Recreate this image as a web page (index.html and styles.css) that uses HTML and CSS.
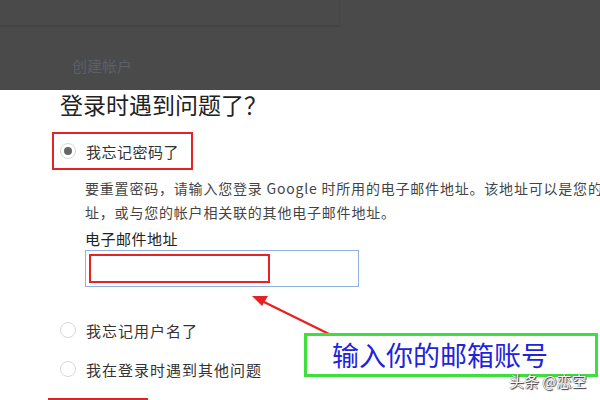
FILE: index.html
```html
<!DOCTYPE html>
<html lang="zh-CN">
<head>
  <meta charset="UTF-8">
  <title>登录时遇到问题了？</title>
  <link rel="stylesheet" href="styles.css">
</head>
<body>
  <div class="topBar">
    <div class="toolStrip"></div>
    <a class="createLink">创建帐户</a>
  </div>

  <div class="main">
    <h1>登录时遇到问题了？</h1>

    <label class="option marked">
      <span class="radio checked"></span>
      <span>我忘记密码了</span>
    </label>

    <div class="details">
      <p class="hint">
        <span class="line">要重置密码，请输入您登录 Google 时所用的电子邮件地址。该地址可以是您的</span>
        <span class="line">址，或与您的帐户相关联的其他电子邮件地址。</span>
      </p>
      <div class="fieldLabel">电子邮件地址</div>
      <div class="emailBox">
        <div class="emailMark"></div>
      </div>
    </div>

    <label class="option second">
      <span class="radio"></span>
      <span>我忘记用户名了</span>
    </label>
    <label class="option">
      <span class="radio"></span>
      <span>我在登录时遇到其他问题</span>
    </label>

    <div class="nextMark"></div>
  </div>

  <svg class="arrow" width="600" height="400" viewBox="0 0 600 400">
    <line x1="331" y1="335" x2="262" y2="301" stroke="#e42424" stroke-width="2.5"/>
    <polygon points="252,296 268,296 262,306" fill="#e42424"/>
  </svg>

  <div class="note">输入你的邮箱账号</div>
  <div class="watermark">头条 @恋空</div>
</body>
</html>
```

FILE: styles.css
```css
body { margin:0; width:600px; height:400px; overflow:hidden; background:#fff; position:relative; font-family:"Noto Sans CJK SC", "Noto Sans", sans-serif; color:#333; }

.topBar { height:90px; background:#4a4a4a; }
.toolStrip { width:339px; height:25px; border-bottom:2px solid #444; border-right:1px solid #464646; }
.createLink { display:block; margin-top:29px; padding-left:72px; font-size:15px; line-height:20px; color:#5b5f68; }

.main { padding-left:60px; }
h1 { margin:0; font-size:23px; line-height:28px; font-weight:normal; color:#222; }

.option { display:flex; align-items:center; gap:10px; height:24px; font-size:15px; letter-spacing:1px; color:#333; }
.option.marked { margin:14px 0 0 -8px; width:141px; height:38px; box-sizing:border-box; padding-left:6px; border:2px solid #e42424; letter-spacing:0.5px; }
.option.second { margin-top:31px; }
.option.second + .option { margin-top:15px; }
.radio { width:16px; height:16px; box-sizing:border-box; border:1px solid #d8d8d8; border-radius:50%; background:#fff; display:flex; align-items:center; justify-content:center; }
.radio.checked::after { content:""; width:8px; height:8px; border-radius:50%; background:#666; }

.details { padding-left:25px; }
.hint { margin:6px 0 0; font-size:14px; line-height:24px; letter-spacing:0.8px; color:#444; }
.hint .line { display:block; white-space:nowrap; }
.fieldLabel { margin-top:4px; font-size:15px; line-height:22px; letter-spacing:0.5px; color:#222; }
.emailBox { width:274px; height:37px; box-sizing:border-box; padding:3px; border:1px solid #8fb0e0; }
.emailMark { width:181px; height:29px; box-sizing:border-box; border:2px solid #e42424; }

.nextMark { margin:17px 0 0 -12px; width:100px; height:0; border-top:2px solid #e42424; }

.arrow { position:absolute; left:0; top:0; }
.note { position:absolute; left:304px; top:333px; width:294px; height:44px; box-sizing:border-box; border:3px solid #3ddf3d; padding-left:25px; font-size:27px; line-height:38px; color:#2222dd; background:#fff; }
.watermark { position:absolute; left:509px; top:371px; font-size:15px; line-height:20px; color:#fff; text-shadow:0 0 1px #222, 1px 1px 1px #333; }
```
